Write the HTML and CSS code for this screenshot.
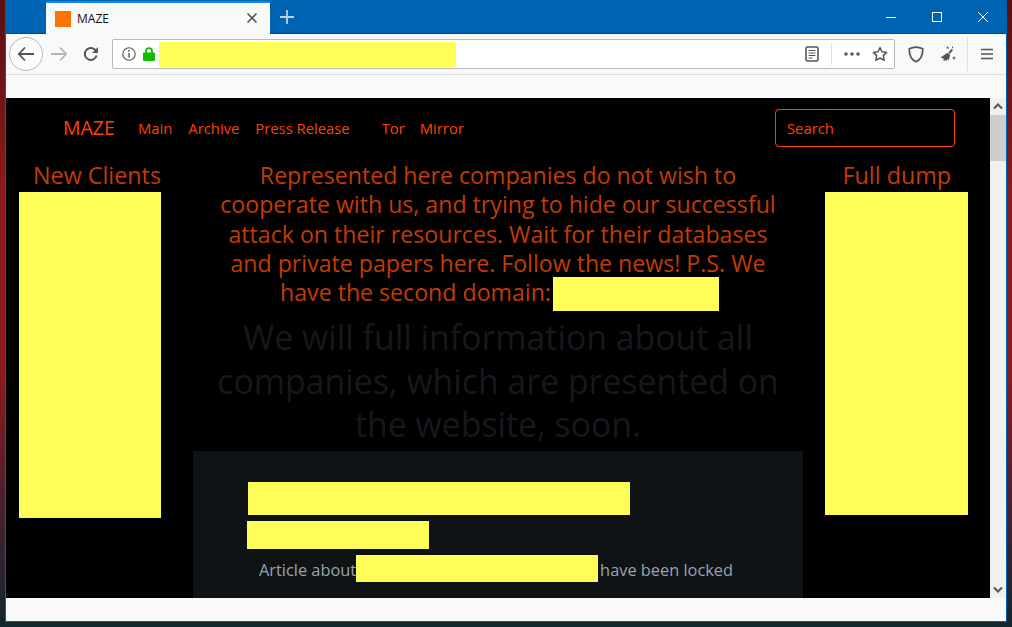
FILE: index.html
```html
<!DOCTYPE html>
<html lang="en">
<head>
<meta charset="utf-8">
<title>MAZE</title>
<link rel="stylesheet" href="styles.css">
</head>
<body>
<div class="window">
  <div class="titlebar">
    <div class="tab">
      <span class="favicon"></span>
      <span class="tab-title">MAZE</span>
      <svg class="tab-close" width="12" height="12" viewBox="0 0 12 12"><path d="M1.5 1.5l9 9M10.5 1.5l-9 9" stroke="#555" stroke-width="1.6" fill="none"/></svg>
    </div>
    <svg class="newtab" width="16" height="16" viewBox="0 0 16 16"><path d="M8 1v14M1 8h14" stroke="#b9d3ea" stroke-width="1.8" fill="none"/></svg>
    <div class="winctl">
      <svg width="12" height="12" viewBox="0 0 12 12"><path d="M1 6.5h10" stroke="#fff" fill="none"/></svg>
      <svg width="12" height="12" viewBox="0 0 12 12"><rect x="1.5" y="1.5" width="9" height="9" stroke="#fff" fill="none"/></svg>
      <svg width="12" height="12" viewBox="0 0 12 12"><path d="M1 1l10 10M11 1L1 11" stroke="#fff" fill="none"/></svg>
    </div>
  </div>
  <div class="navbar">
    <div class="backbtn">
      <svg width="18" height="16" viewBox="0 0 18 16"><path d="M8 1.5L1.8 8 8 14.5M2 8h15" stroke="#555" stroke-width="1.8" fill="none"/></svg>
    </div>
    <svg class="fwd" width="18" height="16" viewBox="0 0 18 16"><path d="M10 1.5L16.2 8 10 14.5M16 8H1" stroke="#b4b4b4" stroke-width="1.8" fill="none"/></svg>
    <svg class="reload" width="16" height="16" viewBox="0 0 16 16"><path d="M13.6 9.5A6 6 0 1 1 12 3.6L14 5.4" stroke="#555" stroke-width="2" fill="none"/><path d="M15 1v6H9z" fill="#555"/></svg>
    <div class="urlbar">
      <svg class="info" width="14" height="14" viewBox="0 0 14 14"><circle cx="7" cy="7" r="6.2" stroke="#555" stroke-width="1.1" fill="none"/><path d="M7 6v4.4" stroke="#555" stroke-width="1.4"/><circle cx="7" cy="3.9" r=".9" fill="#555"/></svg>
      <svg class="lock" width="12" height="14" viewBox="0 0 12 14"><path d="M3 6V4.2a3 3 0 0 1 6 0V6" stroke="#12bc00" stroke-width="1.8" fill="none"/><rect y="5.6" width="12" height="8.400" rx="1" fill="#12bc00"/></svg>
      <span class="mark url-mark"></span>
      <span class="spacer"></span>
      <svg width="14" height="16" viewBox="0 0 14 16"><rect x="1" y="1" width="12" height="14" rx="1.5" stroke="#555" stroke-width="1.6" fill="none"/><path d="M3.500 4.500h7M3.500 7h7M3.500 9.500h7M3.500 12h4" stroke="#555"/></svg>
      <span class="sep"></span>
      <svg class="dots" width="16" height="4" viewBox="0 0 16 4"><circle cx="2" cy="2" r="1.7" fill="#555"/><circle cx="8" cy="2" r="1.7" fill="#555"/><circle cx="14" cy="2" r="1.700" fill="#555"/></svg>
      <svg width="16" height="16" viewBox="0 0 16 16"><path d="M8 1.500l2 4.300 4.700.6-3.400 3.200.9 4.700L8 12l-4.200 2.300.9-4.700L1.300 6.400 6 5.800z" stroke="#555" stroke-width="1.500" fill="none" stroke-linejoin="round"/></svg>
    </div>
    <svg class="shield" width="16" height="17" viewBox="0 0 16 17"><path d="M8 1.200C5.500 1.200 3 2 1.200 2.800c0 6 1.500 10.800 6.800 13 5.300-2.200 6.800-7 6.800-13C13 2 10.500 1.200 8 1.200z" stroke="#555" stroke-width="1.700" fill="none"/></svg>
    <svg class="broom" width="17" height="17" viewBox="0 0 17 17"><path d="M12.500 3l1.500 1.300-3.200 3.600-1.500-1.300z" fill="#555"/><path d="M8.500 6.800l2.600 2.300-1.300 5.200-1.600-1-.6 1.700-1.400-1-1 1-1-.9.700-1.400L1.500 11.500z" fill="#555"/><path d="M13.500.5v1.800M15 10.500v3M13.500 12h3M8.500.500v1.500M10 2h-2.500" stroke="#555" fill="none"/></svg>
    <span class="sep tall"></span>
    <svg class="menu" width="12" height="12" viewBox="0 0 12 12"><path d="M0 1.500h12M0 6h12M0 10.500h12" stroke="#555" stroke-width="1.600" fill="none"/></svg>
  </div>
  <div class="strip"></div>
  <div class="viewport">
    <div class="page">
      <nav class="sitenav">
        <a class="brand">MAZE</a>
        <a class="link">Main</a>
        <a class="link">Archive</a>
        <a class="link">Press Release</a>
        <a class="link tor">Tor</a>
        <a class="link">Mirror</a>
        <div class="search">Search</div>
      </nav>
      <div class="cols">
        <aside class="side left">
          <h4 class="side-title">New Clients</h4>
          <div class="mark left-mark"></div>
        </aside>
        <main class="center">
          <h4 class="lead">Represented here companies do not wish to<br>cooperate with us, and trying to hide our successful<br>attack on their resources. Wait for their databases<br>and private papers here. Follow the news! P.S. We<br>have the second domain: <span class="mark domain-mark"></span></h4>
          <h2 class="dim">We will full information about all<br>companies, which are presented on<br>the website, soon.</h2>
          <article class="card">
            <div class="mark card-mark1"></div>
            <div class="mark card-mark2"></div>
            <p class="article"><span class="atext">Article about</span><span class="mark inline-mark"></span><span class="atext">have been locked</span></p>
          </article>
        </main>
        <aside class="side right">
          <h4 class="side-title">Full dump</h4>
          <div class="mark right-mark"></div>
        </aside>
      </div>
    </div>
    <div class="scrollbar">
      <svg width="12" height="8" viewBox="0 0 12 8"><path d="M2 6.500l4-4 4 4" stroke="#555" stroke-width="2" fill="none"/></svg>
      <div class="thumb"></div>
      <span class="spacer"></span>
      <svg width="12" height="8" viewBox="0 0 12 8"><path d="M2 1.500l4 4 4-4" stroke="#555" stroke-width="2" fill="none"/></svg>
    </div>
  </div>
  <div class="strip bottom"></div>
</div>
</body>
</html>
```
FILE: styles.css
```css
* { box-sizing: border-box; }
html, body { margin: 0; height: 627px; overflow: hidden; }
body {
  padding: 0 5px 5px 5px;
  background: linear-gradient(180deg, #5a0f0f 0%, #8a1a1e 30%, #8a1a1e 60%, #4a2030 80%, #12262e 100%);
  font-family: "Open Sans", "Noto Sans", sans-serif;
}
.window {
  width: 1002px;
  height: 622px;
  display: flex;
  flex-direction: column;
  border: 1px solid #0063b1;
  border-top: 0;
  background: #f9f9f9;
}
.titlebar {
  height: 34px;
  flex: none;
  display: flex;
  align-items: center;
  background: #0063b1;
  border-bottom: 1px solid #004a85;
}
.tab {
  margin-left: 40px;
  width: 224px;
  height: 34px;
  align-self: flex-start;
  margin-top: 1px;
  display: flex;
  align-items: center;
  padding-left: 9px;
  background: #f9f9f9;
  border-top: 2px solid #0a84ff;
}
.favicon { width: 16px; height: 16px; background: #ff7300; margin-right: 6px; }
.tab-title { font: 12px "Open Sans", sans-serif; color: #111; flex: 1; position: relative; top: -1px; }
.tab-close { margin-right: 12px; position: relative; top: -1px; }
.newtab { margin-left: 9px; }
.winctl {
  margin-left: auto;
  display: flex;
  gap: 34px;
  padding-right: 17px;
}
.navbar {
  height: 41px;
  flex: none;
  display: flex;
  align-items: center;
  background: #f9f9f9;
  border-bottom: 1px solid #ddd;
  padding-left: 3px;
}
.backbtn {
  width: 34px;
  height: 34px;
  border-radius: 50%;
  border: 1px solid #b8b8b8;
  background: #fcfcfc;
  display: flex;
  align-items: center;
  justify-content: center;
}
.fwd { margin-left: 7px; }
.reload { margin-left: 15px; }
.urlbar {
  margin-left: 13px;
  width: 783px;
  height: 30px;
  display: flex;
  align-items: center;
  background: #fff;
  border: 1px solid #b8b8b8;
  border-radius: 2px;
  padding: 0 6px 0 9px;
}
.info { flex: none; }
.lock { margin-left: 7px; flex: none; }
.url-mark { width: 297px; height: 25px; margin-left: 4px; }
.spacer { flex: 1; }
.sep { width: 1px; height: 22px; background: #e0e0e0; margin: 0 12px 0 12px; }
.dots { margin-right: 12px; }
.shield { margin-left: 13px; }
.broom { margin-left: 15px; }
.sep.tall { height: 34px; margin: 0 13px 0 11px; }
.strip { height: 23px; flex: none; background: #f9f9f9; }
.viewport { height: 500px; flex: none; display: flex; }
.page { width: 984px; height: 500px; background: #000; overflow: hidden; }
.scrollbar {
  width: 16px;
  display: flex;
  flex-direction: column;
  align-items: center;
  background: #f0f0f0;
}
.scrollbar svg { margin: 4px 0; flex: none; }
.thumb { width: 100%; height: 46px; background: #cdcdcd; margin-top: 1px; }
.sitenav {
  height: 60px;
  display: flex;
  align-items: center;
  padding-left: 57px;
  color: #ff4000;
}
.brand { font-size: 19.500px; width: 75px; position: relative; top: -1px; }
.link { font-size: 14.800px; margin-right: 16px; }
.link.tor { margin-left: 16px; margin-right: 15px; }
.search {
  margin-left: auto;
  margin-right: 35px;
  width: 180px;
  height: 38px;
  display: flex;
  align-items: center;
  padding-left: 11px;
  font-size: 14.800px;
  border: 1px solid #ff4000;
  border-radius: 4px;
}
.cols { display: flex; align-items: flex-start; }
.side { flex: none; }
.side.left { width: 187px; padding-left: 13px; }
.side.right { width: 184px; margin-left: 22px; padding-left: 0; }
.side-title {
  margin: 0;
  font-size: 23.300px;
  font-weight: 400;
  line-height: 34px;
  color: #c23c00;
  text-align: right;
}
.left .side-title { width: 142px; }
.right .side-title { width: 126px; }
.mark { background: #fffe58; display: inline-block; }
.left-mark { display: block; width: 142px; height: 326px; }
.right-mark { display: block; width: 143px; height: 323px; }
.center { width: 610px; flex: none; }
.lead {
  margin: 0;
  font-size: 23.150px;
  font-weight: 400;
  line-height: 29.250px;
  text-align: center;
  color: #c23c00;
  padding-top: 3px;
}
.domain-mark { width: 166px; height: 34px; vertical-align: middle; margin: -1px -3px 0 -4px; }
.dim {
  margin: 5px 0 0;
  font-size: 33.800px;
  font-weight: 400;
  line-height: 43.200px;
  text-align: center;
  color: #15191d;
}
.card {
  margin-top: 5px;
  height: 148px;
  background: #0f1316;
  padding: 31px 0 0 54px;
}
.card-mark1 { display: block; width: 382px; height: 33px; margin-left: 1px; }
.card-mark2 { display: block; width: 182px; height: 28px; margin-top: 6px; }
.article {
  margin: 6px 0 0 12px;
  display: flex;
  align-items: center;
  font-size: 16.350px;
  color: #97a3af;
  white-space: nowrap;
}
.atext { padding-top: 4px; }
.inline-mark { width: 242px; height: 27px; margin: 0 2px 0 0; }
```
